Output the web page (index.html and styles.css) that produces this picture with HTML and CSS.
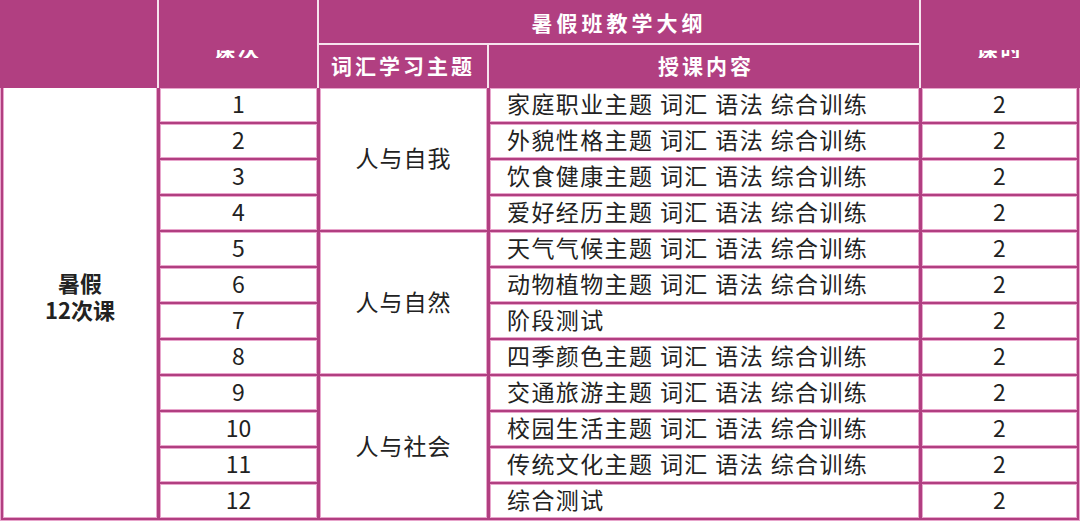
FILE: index.html
```html
<!DOCTYPE html>
<html lang="zh-CN">
<head>
<meta charset="utf-8">
<title>暑假班教学大纲</title>
<link rel="stylesheet" href="styles.css">
</head>
<body>
<div class="sheet">
  <div class="head">
    <div class="hc h-blank"></div>
    <div class="hc h-num"><div class="clip"><span>课次</span></div></div>
    <div class="hc h-title">暑假班教学大纲</div>
    <div class="hc h-hours"><div class="clip"><span>课时</span></div></div>
    <div class="hc h-theme">词汇学习主题</div>
    <div class="hc h-content">授课内容</div>
  </div>
  <div class="body">
    <div class="cell c-term"><span>暑假</span><span>12次课</span></div>

    <div class="cell c-num">1</div>
    <div class="cell c-theme">人与自我</div>
    <div class="cell c-content">家庭职业主题 词汇 语法 综合训练</div>
    <div class="cell c-hours">2</div>

    <div class="cell c-num">2</div>
    <div class="cell c-content">外貌性格主题 词汇 语法 综合训练</div>
    <div class="cell c-hours">2</div>

    <div class="cell c-num">3</div>
    <div class="cell c-content">饮食健康主题 词汇 语法 综合训练</div>
    <div class="cell c-hours">2</div>

    <div class="cell c-num">4</div>
    <div class="cell c-content">爱好经历主题 词汇 语法 综合训练</div>
    <div class="cell c-hours">2</div>

    <div class="cell c-num">5</div>
    <div class="cell c-theme">人与自然</div>
    <div class="cell c-content">天气气候主题 词汇 语法 综合训练</div>
    <div class="cell c-hours">2</div>

    <div class="cell c-num">6</div>
    <div class="cell c-content">动物植物主题 词汇 语法 综合训练</div>
    <div class="cell c-hours">2</div>

    <div class="cell c-num">7</div>
    <div class="cell c-content">阶段测试</div>
    <div class="cell c-hours">2</div>

    <div class="cell c-num">8</div>
    <div class="cell c-content">四季颜色主题 词汇 语法 综合训练</div>
    <div class="cell c-hours">2</div>

    <div class="cell c-num">9</div>
    <div class="cell c-theme">人与社会</div>
    <div class="cell c-content">交通旅游主题 词汇 语法 综合训练</div>
    <div class="cell c-hours">2</div>

    <div class="cell c-num">10</div>
    <div class="cell c-content">校园生活主题 词汇 语法 综合训练</div>
    <div class="cell c-hours">2</div>

    <div class="cell c-num">11</div>
    <div class="cell c-content">传统文化主题 词汇 语法 综合训练</div>
    <div class="cell c-hours">2</div>

    <div class="cell c-num">12</div>
    <div class="cell c-content">综合测试</div>
    <div class="cell c-hours">2</div>
  </div>
</div>
</body>
</html>
```

FILE: styles.css
```css
html, body {
  margin: 0;
  padding: 0;
  background: #b13f81;
}
body {
  width: 1080px;
  height: 521px;
  overflow: hidden;
  font-family: "Noto Sans CJK SC", "Noto Sans", sans-serif;
}
.sheet {
  width: 1080px;
  height: 521px;
  display: flex;
  flex-direction: column;
}

/* header */
.head {
  display: grid;
  grid-template-columns: 157px 158px 168px 430px 159px;
  grid-template-rows: 43px 43px;
  gap: 2px;
  background: #f6e4ee;
  height: 88px;
}
.hc {
  background: #b13f81;
  color: #ffffff;
  font-weight: 700;
  font-size: 21px;
  letter-spacing: 3px;
  display: flex;
  align-items: center;
  justify-content: center;
  line-height: 1;
}
.h-blank { grid-column: 1; grid-row: 1 / span 2; }
.h-num { grid-column: 2; grid-row: 1 / span 2; }
.h-title { grid-column: 3 / span 2; grid-row: 1; letter-spacing: 4px; padding-top: 1px; }
.h-hours { grid-column: 5; grid-row: 1 / span 2; }
.h-theme { grid-column: 3; grid-row: 2; padding-bottom: 3px; }
.h-content { grid-column: 4; grid-row: 2; padding-left: 4px; padding-bottom: 3px; }

.h-num, .h-hours {
  align-items: flex-start;
  padding-top: 50px;
}
.clip {
  height: 8px;
  overflow: hidden;
  line-height: 21px;
}
.clip span {
  display: block;
  margin-top: -12px;
}

/* body */
.body {
  flex: 1;
  display: grid;
  grid-template-columns: 154px 157px 167px 429px 155px;
  grid-template-rows: repeat(12, 34px);
  gap: 2px 3px;
  padding: 0 2px 2px 2px;
  border: 1px solid #e8a6cc;
  border-top: none;
  background: #b13f81;
}
.cell {
  background: #ffffff;
  border: 1px solid #e8a6cc;
  color: #222222;
  font-size: 23px;
  display: flex;
  align-items: center;
  justify-content: center;
  line-height: 1;
  padding-bottom: 3px;
  box-sizing: border-box;
}
.c-term {
  grid-column: 1;
  grid-row: 1 / span 12;
  flex-direction: column;
  gap: 5px;
  font-weight: 700;
  font-size: 22px;
  line-height: 1;
  padding-bottom: 14px;
  border-top: none;
}
.c-num { grid-column: 2; }
.c-theme {
  grid-column: 3;
  grid-row: span 4;
  letter-spacing: 1px;
}
.c-content {
  grid-column: 4;
  justify-content: flex-start;
  padding-left: 16px;
  letter-spacing: 1.4px;
}
.c-hours { grid-column: 5; }
```
